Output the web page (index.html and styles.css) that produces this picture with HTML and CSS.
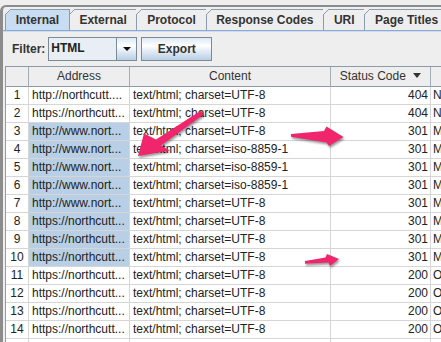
FILE: index.html
```html
<!DOCTYPE html>
<html lang="en">
<head>
    <meta charset="UTF-8">
    <title>Internal - HTML</title>
    <link rel="stylesheet" href="styles.css">
</head>
<body>
<div class="frame">
    <!-- Tab strip -->
    <div class="tabs">
        <div class="tab active">Internal</div>
        <div class="tab">External</div>
        <div class="tab">Protocol</div>
        <div class="tab">Response Codes</div>
        <div class="tab">URI</div>
        <div class="tab">Page Titles</div>
    </div>

    <div class="panel">
        <!-- Filter row -->
        <div class="filter-bar">
            <span class="filter-label">Filter:</span>
            <div class="combo">
                <span class="combo-value">HTML</span>
                <span class="combo-btn"><i class="caret"></i></span>
            </div>
            <button class="btn">Export</button>
        </div>

        <!-- Results table -->
        <div class="grid">
            <div class="row head">
                <div class="cell"></div>
                <div class="cell">Address</div>
                <div class="cell">Content</div>
                <div class="cell">Status Code <i class="sort"></i></div>
                <div class="cell"></div>
            </div>
            <div class="row"><div class="cell num">1</div><div class="cell">http://northcutt....</div><div class="cell">text/html; charset=UTF-8</div><div class="cell code">404</div><div class="cell last">Not Found</div></div>
            <div class="row"><div class="cell num">2</div><div class="cell">https://northcutt...</div><div class="cell">text/html; charset=UTF-8</div><div class="cell code">404</div><div class="cell last">Not Found</div></div>
            <div class="row"><div class="cell num">3</div><div class="cell sel">http://www.nort...</div><div class="cell">text/html; charset=UTF-8</div><div class="cell code">301</div><div class="cell last">Moved Permanently</div></div>
            <div class="row"><div class="cell num">4</div><div class="cell sel">http://www.nort...</div><div class="cell">text/html; charset=iso-8859-1</div><div class="cell code">301</div><div class="cell last">Moved Permanently</div></div>
            <div class="row"><div class="cell num">5</div><div class="cell sel">http://www.nort...</div><div class="cell">text/html; charset=iso-8859-1</div><div class="cell code">301</div><div class="cell last">Moved Permanently</div></div>
            <div class="row"><div class="cell num">6</div><div class="cell sel">http://www.nort...</div><div class="cell">text/html; charset=iso-8859-1</div><div class="cell code">301</div><div class="cell last">Moved Permanently</div></div>
            <div class="row"><div class="cell num">7</div><div class="cell sel">http://www.nort...</div><div class="cell">text/html; charset=UTF-8</div><div class="cell code">301</div><div class="cell last">Moved Permanently</div></div>
            <div class="row"><div class="cell num">8</div><div class="cell sel">https://northcutt...</div><div class="cell">text/html; charset=UTF-8</div><div class="cell code">301</div><div class="cell last">Moved Permanently</div></div>
            <div class="row"><div class="cell num">9</div><div class="cell sel">https://northcutt...</div><div class="cell">text/html; charset=UTF-8</div><div class="cell code">301</div><div class="cell last">Moved Permanently</div></div>
            <div class="row"><div class="cell num">10</div><div class="cell sel">https://northcutt...</div><div class="cell">text/html; charset=UTF-8</div><div class="cell code">301</div><div class="cell last">Moved Permanently</div></div>
            <div class="row"><div class="cell num">11</div><div class="cell">https://northcutt...</div><div class="cell">text/html; charset=UTF-8</div><div class="cell code">200</div><div class="cell last">OK</div></div>
            <div class="row"><div class="cell num">12</div><div class="cell">https://northcutt...</div><div class="cell">text/html; charset=UTF-8</div><div class="cell code">200</div><div class="cell last">OK</div></div>
            <div class="row"><div class="cell num">13</div><div class="cell">https://northcutt...</div><div class="cell">text/html; charset=UTF-8</div><div class="cell code">200</div><div class="cell last">OK</div></div>
            <div class="row"><div class="cell num">14</div><div class="cell">https://northcutt...</div><div class="cell">text/html; charset=UTF-8</div><div class="cell code">200</div><div class="cell last">OK</div></div>
            <div class="row"><div class="cell num"></div><div class="cell"></div><div class="cell"></div><div class="cell code"></div><div class="cell last"></div></div>
        </div>
    </div>
</div>

<!-- Annotation arrows drawn over the screenshot -->
<svg class="marks" width="441" height="342" viewBox="0 0 441 342">
    <path d="M201 110.5 L156 139.5 L144 133.5 L138 156 L170 150.5 L161 145.5 L203.5 114.5 Z"/>
    <path d="M291 134 L324 131 L326.5 126.5 L343.5 137 L329 146 L326.5 142.5 L291 136.8 Z"/>
    <path d="M305 261 L325.5 257.5 L327 254 L339 259 L330 266 L328.5 262.5 L305 263.8 Z"/>
</svg>
</body>
</html>
```

FILE: styles.css
```css
/* General page */
body {
    margin: 0;
    height: 342px;
    overflow: hidden;
    background: #eeeeee;
    color: #333;
    font-family: "Liberation Sans", Arial, sans-serif;
    font-size: 12px;
}

/* Outer window frame */
.frame {
    margin-top: 5px;
    height: 337px;
    border-top: 2px solid #8c8c8c;
    border-left: 3px solid #8c8c8c;
    border-top-left-radius: 6px;
    box-sizing: border-box;
}

/* Tabs */
.tabs {
    display: flex;
    padding: 2px 0 0 2px;
    white-space: nowrap;
}

.tab {
    position: relative;
    height: 20px;
    line-height: 20px;
    padding: 0 9.7px;
    margin-right: -1px;
    border: 1px solid #8a9bad;
    border-bottom: none;
    background: #eeeeee;
    font-weight: bold;
}

/* the cut top-left corner of each tab */
.tab::before {
    content: "";
    position: absolute;
    top: -1px;
    left: -1px;
    width: 6px;
    height: 6px;
    background: linear-gradient(135deg, #eeeeee 0 44%, #8a9bad 44% 58%, transparent 58%);
}

.tab.active {
    background: #c8ddf2;
    z-index: 1;
}

/* Tab content area */
.panel {
    border-top: 1px solid #8fa9d2;
    box-shadow: inset 0 1px 0 #c8ddf2;
    padding: 6px 0 0 2px;
}

/* Filter row */
.filter-bar {
    display: flex;
    align-items: center;
    height: 24px;
    padding-left: 7px;
}

.filter-label {
    font-weight: bold;
    margin-right: 3px;
}

.combo {
    display: flex;
    width: 89px;
    height: 24px;
    box-sizing: border-box;
    border: 1px solid #7a8a99;
    background: #e9eef4;
}

.combo-value {
    flex: 1;
    padding-left: 2px;
    line-height: 21px;
    font-weight: bold;
    color: #222;
}

.combo-btn {
    width: 19px;
    border-left: 1px solid #7a8a99;
    background: linear-gradient(#dde8f3, #ffffff 35%, #dde8f3 65%, #b8cfe5);
    display: flex;
    align-items: center;
    justify-content: center;
}

.caret {
    width: 0;
    height: 0;
    border-left: 4.5px solid transparent;
    border-right: 4.5px solid transparent;
    border-top: 4.5px solid #111;
}

.btn {
    margin-left: 4px;
    width: 71px;
    height: 24px;
    border: 1px solid #7a8a99;
    background: linear-gradient(#dde8f3, #ffffff 35%, #e2ebf5 60%, #b8cfe5);
    font-family: inherit;
    font-size: 12px;
    font-weight: bold;
    color: #333;
    padding: 0;
}

/* Table */
.grid {
    margin-top: 5px;
    width: 600px;
    border-top: 1px solid #8d9aa8;
    border-left: 1px solid #8d9aa8;
    background: #fff;
}

.row {
    display: grid;
    grid-template-columns: 23px 101px 201px 100px 160px;
    height: 18px;
}

.cell {
    box-sizing: border-box;
    border-right: 1px solid #d6d6d6;
    border-bottom: 1px solid #d6d6d6;
    padding: 0 3px;
    line-height: 17px;
    white-space: nowrap;
    overflow: hidden;
    color: #222;
}

.row.head {
    height: 20px;
}

.row.head .cell {
    background: #eeeeee;
    border-right-color: #a3adb8;
    border-bottom-color: #8d9aa8;
    line-height: 19px;
    text-align: center;
    color: #333;
}

.sort {
    display: inline-block;
    margin-left: 4px;
    vertical-align: 2px;
    width: 0;
    height: 0;
    border-left: 4.5px solid transparent;
    border-right: 4.5px solid transparent;
    border-top: 5px solid #333;
}

.num {
    text-align: center;
    padding: 0;
}

.code {
    text-align: right;
    padding-right: 2px;
}

.last {
    padding-left: 2px;
}

.sel {
    background: #b8cfe5;
}

/* Arrows overlay */
.marks {
    position: absolute;
    top: 0;
    left: 0;
    fill: #f0256b;
    filter: drop-shadow(1px 2px 1px rgba(0, 0, 0, 0.4));
    pointer-events: none;
}
```
